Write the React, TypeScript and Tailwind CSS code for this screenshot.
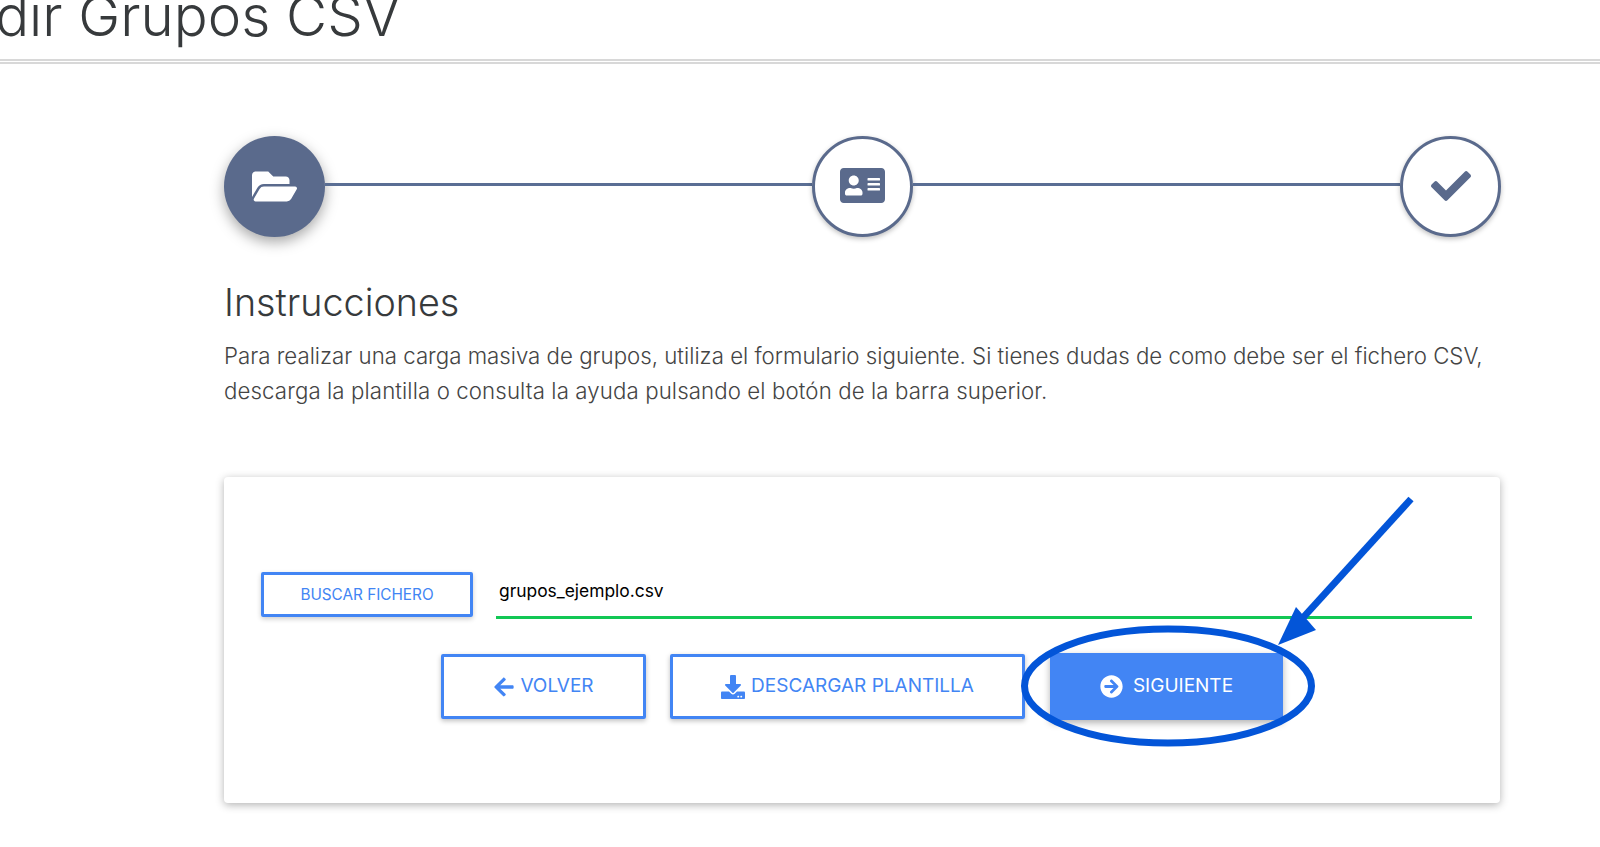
import { FaAddressCard, FaArrowCircleRight, FaArrowLeft, FaCheck, FaDownload, FaFolderOpen } from 'react-icons/fa'

export default function App() {
  return (
    <div className="relative w-[1600px] h-[847px] overflow-hidden bg-white font-['Inter',sans-serif] text-[#373a3c]">
      <div className="h-[64px] border-b-[5px] border-double border-[#d8d8d8] overflow-hidden">
        <h1 className="-ml-[107px] -mt-[19px] text-[56.4px] leading-[70px] font-light whitespace-nowrap">Añadir Grupos CSV</h1>
      </div>

      <div className="ml-[224px] w-[1276px] pt-[72px]">
        <div className="flex items-center -mr-[1px]">
          <div className="w-[101px] h-[101px] rounded-full bg-[#5a6a8c] shadow-[0_5px_14px_rgba(0,0,0,0.35)] flex items-center justify-center text-white text-[45px]">
            <FaFolderOpen />
          </div>
          <div className="flex-1 h-[3px] bg-[#5a6e94] -mt-[4px]" />
          <div className="w-[101px] h-[101px] rounded-full border-[3px] border-[#5a6a8c] bg-white shadow-[0_2px_5px_rgba(0,0,0,0.25)] flex items-center justify-center text-[#5a6a8c] text-[45px]">
            <FaAddressCard className="-mt-[2px]" />
          </div>
          <div className="flex-1 h-[3px] bg-[#5a6e94] -mt-[4px]" />
          <div className="w-[101px] h-[101px] rounded-full border-[3px] border-[#5a6a8c] bg-white shadow-[0_2px_5px_rgba(0,0,0,0.25)] flex items-center justify-center text-[#5a6a8c] text-[40px]">
            <FaCheck className="-mt-[2px]" />
          </div>
        </div>

        <h2 className="mt-[40px] text-[37.7px] leading-[50px] font-light">Instrucciones</h2>
        <p className="mt-[11px] text-[22.25px] leading-[35px] font-light text-[#444] whitespace-nowrap">
          Para realizar una carga masiva de grupos, utiliza el formulario siguiente. Si tienes dudas de como debe ser el fichero CSV,
          <br />
          <span className="tracking-[0.1px]">descarga la plantilla o consulta la ayuda pulsando el botón de la barra superior.</span>
        </p>

        <div className="mt-[69px] h-[326px] rounded-[4px] bg-white shadow-[0_2px_8px_rgba(0,0,0,0.3)] pt-[95px]">
          <div className="flex items-start pl-[37px] pr-[28px]">
            <button className="w-[212px] h-[45px] border-[3px] border-[#4285f4] rounded-[2px] shadow-[0_2px_5px_rgba(0,0,0,0.2)] text-[#4285f4] text-[15.3px] pt-[1px]">
              BUSCAR FICHERO
            </button>
            <div className="ml-[23px] flex-1 h-[47px] border-b-[3px] border-[#12c754] pl-[3px] pt-[7px] text-[17.4px] leading-[24px] text-black">
              grupos_ejemplo.csv
            </div>
          </div>
          <div className="mt-[34px] ml-[217px] flex items-center">
            <button className="w-[205px] h-[65px] border-[3px] border-[#4285f4] rounded-[2px] shadow-[0_2px_5px_rgba(0,0,0,0.25)] text-[#4285f4] text-[19px] flex items-center justify-center gap-[5px]">
              <FaArrowLeft className="text-[22px]" /> VOLVER
            </button>
            <button className="ml-[24px] w-[355px] h-[65px] border-[3px] border-[#4285f4] rounded-[2px] shadow-[0_2px_5px_rgba(0,0,0,0.25)] text-[#4285f4] text-[19px] flex items-center justify-center gap-[6px]">
              <FaDownload className="text-[24px]" /> DESCARGAR PLANTILLA
            </button>
            <button className="ml-[25px] w-[233px] h-[67px] bg-[#4285f4] shadow-[0_3px_7px_rgba(0,0,0,0.3)] text-white text-[19px] flex items-center justify-center gap-[10px]">
              <FaArrowCircleRight className="text-[23px]" /> SIGUIENTE
            </button>
          </div>
        </div>
      </div>

      <svg className="absolute left-0 top-0 pointer-events-none" width="1600" height="847" viewBox="0 0 1600 847" fill="none">
        <ellipse cx="1168" cy="686" rx="143.5" ry="57" stroke="#0355d8" strokeWidth="7" />
        <path d="M1411 499 L1300 621" stroke="#0355d8" strokeWidth="7" />
        <path d="M1278 645 L1296 607 L1316 630 Z" fill="#0355d8" />
      </svg>
    </div>
  )
}
